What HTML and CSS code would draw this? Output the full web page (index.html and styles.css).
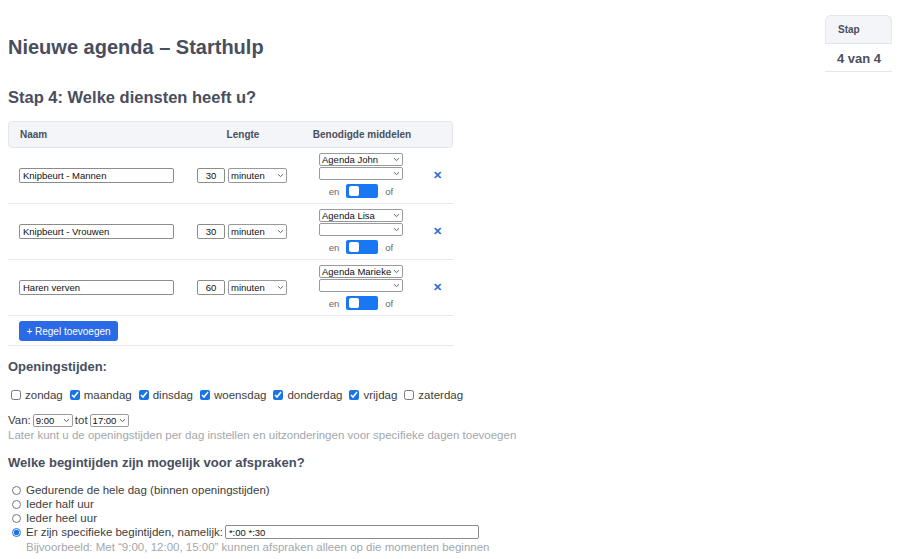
FILE: index.html
```html
<!DOCTYPE html>
<html lang="nl">
<head>
<meta charset="utf-8">
<title>Nieuwe agenda – Starthulp</title>
<link rel="stylesheet" href="styles.css">
</head>
<body>
<div class="page">
  <div class="main">
    <h1 class="title">Nieuwe agenda – Starthulp</h1>
    <h2 class="step">Stap 4: Welke diensten heeft u?</h2>

    <div class="services">
      <div class="row head">
        <div class="c-name">Naam</div>
        <div class="c-len">Lengte</div>
        <div class="c-res">Benodigde middelen</div>
        <div></div>
      </div>

      <div class="row">
        <div class="c-name"><input class="txt name" type="text" value="Knipbeurt - Mannen"></div>
        <div class="c-len"><input class="txt num" type="text" value="30"><select class="sel unit"><option>minuten</option></select></div>
        <div class="c-res">
          <select class="sel res"><option>Agenda John</option></select>
          <select class="sel res"><option></option></select>
          <div class="andor"><span>en</span><span class="toggle"><span class="knob"></span></span><span>of</span></div>
        </div>
        <div class="c-del"><span class="del">✕</span></div>
      </div>

      <div class="row">
        <div class="c-name"><input class="txt name" type="text" value="Knipbeurt - Vrouwen"></div>
        <div class="c-len"><input class="txt num" type="text" value="30"><select class="sel unit"><option>minuten</option></select></div>
        <div class="c-res">
          <select class="sel res"><option>Agenda Lisa</option></select>
          <select class="sel res"><option></option></select>
          <div class="andor"><span>en</span><span class="toggle"><span class="knob"></span></span><span>of</span></div>
        </div>
        <div class="c-del"><span class="del">✕</span></div>
      </div>

      <div class="row">
        <div class="c-name"><input class="txt name" type="text" value="Haren verven"></div>
        <div class="c-len"><input class="txt num" type="text" value="60"><select class="sel unit"><option>minuten</option></select></div>
        <div class="c-res">
          <select class="sel res"><option>Agenda Marieke</option></select>
          <select class="sel res"><option></option></select>
          <div class="andor"><span>en</span><span class="toggle"><span class="knob"></span></span><span>of</span></div>
        </div>
        <div class="c-del"><span class="del">✕</span></div>
      </div>

      <div class="addrow">
        <button class="btn" type="button">+ Regel toevoegen</button>
      </div>
    </div>

    <h3 class="sub">Openingstijden:</h3>
    <div class="days">
      <label><input type="checkbox">zondag</label>
      <label><input type="checkbox" checked>maandag</label>
      <label><input type="checkbox" checked>dinsdag</label>
      <label><input type="checkbox" checked>woensdag</label>
      <label><input type="checkbox" checked>donderdag</label>
      <label><input type="checkbox" checked>vrijdag</label>
      <label><input type="checkbox">zaterdag</label>
    </div>
    <div class="hours">Van: <select class="sel time t1"><option>9:00</option></select> tot <select class="sel time t2"><option>17:00</option></select></div>
    <div class="hint">Later kunt u de openingstijden per dag instellen en uitzonderingen voor specifieke dagen toevoegen</div>

    <h3 class="sub sub2">Welke begintijden zijn mogelijk voor afspraken?</h3>
    <div class="radios">
      <label><input type="radio" name="bt">Gedurende de hele dag (binnen openingstijden)</label>
      <label><input type="radio" name="bt">Ieder half uur</label>
      <label><input type="radio" name="bt">Ieder heel uur</label>
      <label><input type="radio" name="bt" checked>Er zijn specifieke begintijden, namelijk: <input class="txt times" type="text" value="*:00 *:30"></label>
      <div class="hint indent">Bijvoorbeeld: Met “9:00, 12:00, 15:00” kunnen afspraken alleen op die momenten beginnen</div>
    </div>
  </div>

  <aside class="stepbox">
    <div class="sb-head">Stap</div>
    <div class="sb-body">4 van 4</div>
  </aside>
</div>
</body>
</html>
```

FILE: styles.css
```css
* { box-sizing: border-box; }

html, body {
  margin: 0;
  padding: 0;
  background: #ffffff;
}

body {
  font-family: "Liberation Sans", Arial, Helvetica, sans-serif;
  color: #3d3d3d;
  font-size: 11.5px;
}

.page {
  display: flex;
  padding: 0 8px;
}

.main {
  flex: 1;
  min-width: 0;
}

.title {
  margin: 36px 0 0;
  font-size: 20px;
  line-height: 22px;
  font-weight: 700;
  color: #484e5d;
}

.step {
  margin: 29px 0 0;
  font-size: 16.5px;
  line-height: 20px;
  font-weight: 700;
  color: #484e5d;
}

/* services table */
.services {
  width: 445px;
  margin-top: 14px;
}

.row {
  display: grid;
  grid-template-columns: 178px 112px 126px 29px;
  align-items: center;
  height: 56px;
  border-bottom: 1px solid #e7e9ec;
}

.row.head {
  height: 27px;
  background: #f3f5f8;
  border: 1px solid #e3e6ea;
  border-radius: 4px;
  font-size: 10px;
  font-weight: 700;
  color: #4a5060;
}

.row.head .c-name { padding-left: 11px; }
.row.head .c-len,
.row.head .c-res { text-align: center; }

.c-name { padding-left: 11px; }

.c-len {
  display: flex;
  justify-content: center;
  gap: 3px;
}

.c-res {
  display: flex;
  flex-direction: column;
  align-items: center;
  gap: 1px;
}

.c-del {
  display: flex;
  justify-content: center;
  padding-right: 2px;
}

.txt {
  font-family: "Liberation Sans", Arial, sans-serif;
  font-size: 9.5px;
  color: #111;
  height: 15px;
  border: 1px solid #8c8c8c;
  border-radius: 2px;
  padding: 0 3px;
  background: #fff;
  outline: none;
}

.txt.name { width: 155px; }
.txt.num { width: 28px; text-align: center; }

.sel {
  appearance: none;
  -webkit-appearance: none;
  font-family: "Liberation Sans", Arial, sans-serif;
  font-size: 9.5px;
  color: #111;
  height: 14px;
  border: 1px solid #9a9a9a;
  border-radius: 2px;
  padding: 0 9px 0 2px;
  background-color: #fff;
  background-image: url("data:image/svg+xml,%3Csvg xmlns='http://www.w3.org/2000/svg' width='7' height='5' viewBox='0 0 7 5'%3E%3Cpath d='M1 1.2 3.5 3.6 6 1.2' fill='none' stroke='%23555' stroke-width='0.9'/%3E%3C/svg%3E");
  background-repeat: no-repeat;
  background-position: right 2px center;
  line-height: 12px;
}

.sel.unit { width: 59px; height: 15px; }
.sel.res { width: 84px; height: 13px; }

.andor {
  display: flex;
  align-items: center;
  gap: 7px;
  margin-top: 3px;
  font-size: 9.5px;
  color: #666;
}

.toggle {
  display: inline-flex;
  align-items: center;
  width: 32px;
  height: 14px;
  background: #1877f2;
  border-radius: 2px;
  padding-left: 3px;
}

.knob {
  width: 10px;
  height: 10px;
  background: #fff;
  border-radius: 2px;
}

.del {
  color: #2f6fd3;
  font-size: 11px;
  font-weight: 700;
  line-height: 1;
}

.addrow {
  height: 30px;
  padding: 5px 0 0 11px;
  border-bottom: 1px solid #e7e9ec;
}

.btn {
  font-family: "Liberation Sans", Arial, sans-serif;
  font-size: 10px;
  color: #fff;
  background: #2a6ae6;
  border: none;
  border-radius: 3px;
  width: 99px;
  height: 20px;
  padding: 0;
}

/* opening hours */
.sub {
  margin: 12px 0 0;
  font-size: 13px;
  line-height: 18px;
  font-weight: 700;
  color: #484e5d;
}

.days {
  margin-top: 11px;
  display: flex;
  gap: 4px;
  line-height: 16px;
  font-size: 11.5px;
}

.days label {
  display: inline-flex;
  align-items: center;
}

input[type="checkbox"] {
  width: 10px;
  height: 10px;
  margin: 0 4px 0 3px;
  accent-color: #1a73e8;
}

.hours {
  margin-top: 10px;
  line-height: 15px;
  display: flex;
  align-items: center;
  gap: 2px;
}

.sel.time { height: 13px; }
.sel.t1 { width: 40px; }
.sel.t2 { width: 39px; }

.hint {
  line-height: 14px;
  color: #a3a7ae;
}

.sub2 { margin-top: 12px; }

.radios {
  margin-top: 11px;
  display: flex;
  flex-direction: column;
}

.radios label {
  display: flex;
  align-items: center;
  height: 14px;
}

input[type="radio"] {
  width: 9px;
  height: 9px;
  margin: 0 5px 0 4px;
  accent-color: #1a73e8;
}

.txt.times {
  width: 254px;
  height: 14px;
  margin-left: 2px;
}

.hint.indent {
  padding-left: 18px;
  margin-top: 1px;
}

/* step box */
.stepbox {
  width: 67px;
  margin-top: 15px;
  align-self: flex-start;
}

.sb-head {
  height: 28px;
  background: #f3f5f8;
  border: 1px solid #e3e6ea;
  border-bottom: none;
  border-radius: 6px 6px 0 0;
  padding: 8px 0 0 12px;
  font-size: 10px;
  font-weight: 700;
  color: #4a5060;
}

.sb-body {
  height: 29px;
  border-top: 1px solid #e3e6ea;
  border-bottom: 1px solid #e3e6ea;
  padding: 7px 0 0 12px;
  font-size: 13px;
  font-weight: 700;
  color: #4a5060;
}
```
